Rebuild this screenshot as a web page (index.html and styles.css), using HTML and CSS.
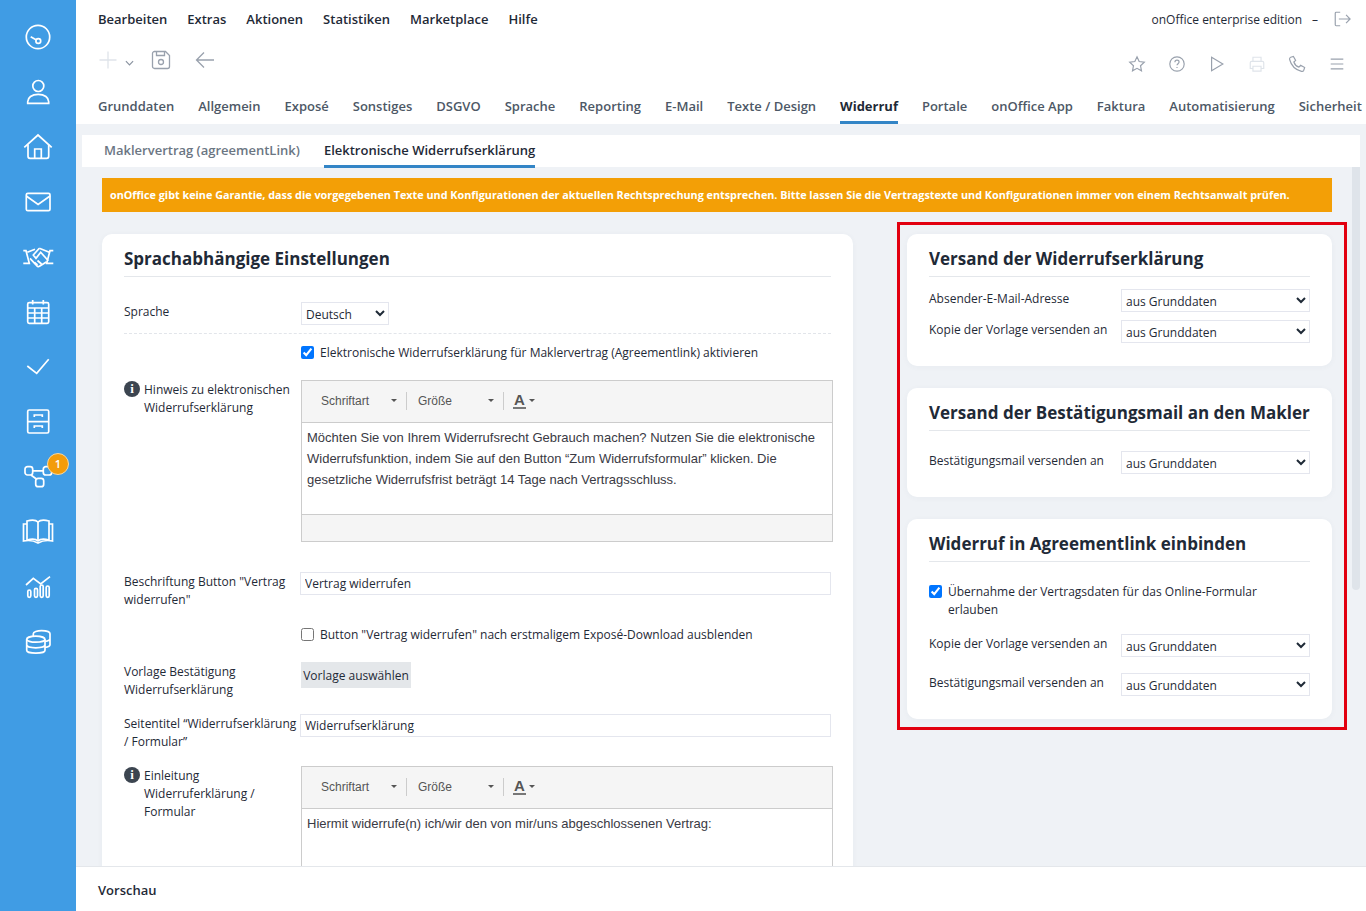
FILE: index.html
```html
<!DOCTYPE html>
<html lang="de">
<head>
    <meta charset="UTF-8">
    <meta name="viewport" content="width=device-width, initial-scale=1.0">
    <title>onOffice enterprise edition</title>
    <link rel="stylesheet" href="styles.css">
</head>
<body>
    <nav class="sidebar">
        <a class="side-item"><svg viewBox="0 0 32 32"><circle cx="16" cy="16" r="11.7"/><circle cx="16.3" cy="20" r="2.4"/><path d="M8.7 15.7l5.3 3"/></svg></a>
        <a class="side-item"><svg viewBox="0 0 32 32"><circle cx="16.3" cy="10" r="5.5"/><path d="M5.7 27.3v-1.5c0-4 4-7.5 10.5-7.5s10.5 3.5 10.5 7.5v1.5z"/></svg></a>
        <a class="side-item"><svg viewBox="0 0 32 32"><path d="M2.3 16.3L16 4l13.7 12.3"/><path d="M6 13.5v11.8a2 2 0 0 0 2 2h16.7a2 2 0 0 0 2-2V13.5"/><path d="M12.7 27.3V18h6.6v9.3"/></svg></a>
        <a class="side-item"><svg viewBox="0 0 32 32"><rect x="4.3" y="7.3" width="23.7" height="17.4" rx="1.5"/><path d="M4.3 10l11.8 8.5L28 10"/></svg></a>
        <a class="side-item"><svg viewBox="0 0 32 32"><path d="M1.3 9.700H4l3.300 12.600h-6"/><path d="M31.300 9.700H28l-3.300 12.600h6.600"/><path d="M5.300 11.300L13 8.300M17.300 7.300l10 4"/><path d="M17.300 7.300L11.300 14l2.700 3.300 4.700-6 7.600 8.400"/><path d="M8 17.300l6 6.500c1 1.400 2.300 2.400 3.500 1.400l7.200-4.500M12.500 21.500l3 2.500M15.500 19.500l4 3.500"/></svg></a>
        <a class="side-item"><svg viewBox="0 0 32 32"><rect x="5.700" y="6.700" width="21" height="20.600" rx="1.500"/><path d="M10.700 4v4.500M21.300 4v4.500M5.700 12h21M5.700 17h21M5.700 22h21M12.700 12v15.300M19.700 12v15.300"/></svg></a>
        <a class="side-item"><svg viewBox="0 0 32 32"><path d="M5.300 15l9.400 7.300 12-14"/></svg></a>
        <a class="side-item"><svg viewBox="0 0 32 32"><rect x="5.700" y="4" width="21" height="23" rx="1.500"/><path d="M5.700 15.700h21M12.300 11V9h8v2M12.300 22v-2h8v2"/></svg></a>
        <a class="side-item"><svg viewBox="0 0 32 32"><rect x="3" y="5.700" width="7.700" height="8.300" rx="2.500"/><rect x="21.300" y="5.700" width="8.400" height="8.300" rx="2.500"/><rect x="13.700" y="17.300" width="8" height="8.400" rx="2.500"/><path d="M10.700 9.800h10.600M9 14l5 3.800"/></svg><span class="badge">1</span></a>
        <a class="side-item"><svg viewBox="0 0 32 32"><path d="M5 5c4-1 9-1 11 1 2-2 7-2 11-1v19c-4-1-9-1-11 1-2-2-7-2-11-1z"/><path d="M16 6v19M5 8H1.500v17c5-1 10-.5 14.500 2 4.500-2.500 9.500-3 14.500-2V8H27"/></svg></a>
        <a class="side-item"><svg viewBox="0 0 32 32"><path d="M4 14l7.300-6.700 7.400 5.700L28 5.700"/><rect x="5.800" y="19" width="3" height="7.300" rx="1.500"/><rect x="12.500" y="17.300" width="3" height="9" rx="1.500"/><rect x="18.200" y="14" width="3" height="12.300" rx="1.500"/><rect x="24.200" y="15" width="3" height="11.300" rx="1.500"/></svg></a>
        <a class="side-item"><svg viewBox="0 0 32 32"><ellipse cx="13.800" cy="13.200" rx="9.100" ry="3"/><path d="M4.700 13.200v11c0 1.700 4 3 9.100 3s9.200-1.300 9.200-3v-11M4.700 18.800c0 1.700 4 3 9.100 3s9.200-1.300 9.200-3"/><path d="M11.300 7.700c0-1.700 3.700-3 8.300-3s8.400 1.300 8.400 3v11c0 1.100-2 2.200-5 2.700M11.300 7.700v2.800M23 15.500c3-.5 5-1.500 5-2.700"/></svg></a>
    </nav>

    <div class="main">
        <header class="header">
            <div class="menu-row">
                <div class="menu">
                    <a>Bearbeiten</a>
                    <a>Extras</a>
                    <a>Aktionen</a>
                    <a>Statistiken</a>
                    <a>Marketplace</a>
                    <a>Hilfe</a>
                </div>
                <div class="edition">
                    <span>onOffice enterprise edition</span>
                    <span class="edition-dash">–</span>
                    <svg class="tool-icon" viewBox="0 0 20 20"><path d="M8 2.500H3.500a1 1 0 0 0-1 1v13a1 1 0 0 0 1 1H8"/><path d="M6.500 10h12M14.500 5.500l4.500 4.500-4.500 4.500"/></svg>
                </div>
            </div>
            <div class="tool-row">
                <div class="tools-left">
                    <svg class="tool-icon faint" viewBox="0 0 20 20"><path d="M10 1.500v17M1.500 10h17"/></svg>
                    <svg class="chevron" viewBox="0 0 10 6"><path d="M1 1l4 4 4-4"/></svg>
                    <svg class="tool-icon save" viewBox="0 0 20 20"><path d="M3 1.500h11.500l4 4v11a2 2 0 0 1-2 2h-13a2 2 0 0 1-2-2v-13a2 2 0 0 1 2-2z"/><circle cx="10" cy="12" r="2.500"/><path d="M5.500 1.500v4h8v-4"/></svg>
                    <svg class="tool-icon back" viewBox="0 0 20 20"><path d="M19 10H1.500M9 2.500L1.500 10 9 17.500"/></svg>
                </div>
                <div class="tools-right">
                    <svg class="tool-icon" viewBox="0 0 20 20"><path d="M10 2l2.400 5.300 5.700.7-4.200 3.900 1.100 5.700L10 14.800l-5 2.800 1.100-5.700L1.900 8l5.700-.7z"/></svg>
                    <svg class="tool-icon" viewBox="0 0 20 20"><circle cx="10" cy="10" r="8"/><path d="M7.700 8c0-1.500 1-2.300 2.300-2.300s2.300.9 2.300 2.100c0 1.800-2.300 1.900-2.300 3.700M10 13.300v1.200"/></svg>
                    <svg class="tool-icon" viewBox="0 0 20 20"><path d="M4 2.500l12.500 7.500L4 17.500z"/></svg>
                    <svg class="tool-icon faint" viewBox="0 0 20 20"><path d="M5.500 7V2.500h9V7M5.500 15H2.500V8.500a1.500 1.500 0 0 1 1.500-1.500h12a1.500 1.500 0 0 1 1.500 1.500V15h-3M5.500 12.500h9v5.500h-9z"/></svg>
                    <svg class="tool-icon" viewBox="0 0 20 20"><path d="M3 2.500l3-1 2.500 4.500-2 1.800c.8 2.500 3 4.800 5.700 5.700l1.800-2 4.500 2.500-1 3c-.4 1-1.500 1.500-2.500 1.200C8.500 16.500 3.500 11.500 1.800 5c-.3-1 .2-2.100 1.200-2.500z"/></svg>
                    <svg class="tool-icon" viewBox="0 0 20 20"><path d="M3 4.500h14M3 10h14M3 15.500h14"/></svg>
                </div>
            </div>
            <div class="tabs">
                <a>Grunddaten</a>
                <a>Allgemein</a>
                <a>Exposé</a>
                <a>Sonstiges</a>
                <a>DSGVO</a>
                <a>Sprache</a>
                <a>Reporting</a>
                <a>E-Mail</a>
                <a>Texte / Design</a>
                <a class="active">Widerruf</a>
                <a>Portale</a>
                <a>onOffice App</a>
                <a>Faktura</a>
                <a>Automatisierung</a>
                <a>Sicherheit</a>
            </div>
        </header>

        <div class="subtabs">
            <a>Maklervertrag (agreementLink)</a>
            <a class="active">Elektronische Widerrufserklärung</a>
        </div>

        <div class="scroll-area">
            <div class="content">
                <div class="warning">onOffice gibt keine Garantie, dass die vorgegebenen Texte und Konfigurationen der aktuellen Rechtsprechung entsprechen. Bitte lassen Sie die Vertragstexte und Konfigurationen immer von einem Rechtsanwalt prüfen.</div>

                <div class="columns">
                    <section class="card left-card">
                        <h2>Sprachabhängige Einstellungen</h2>

                        <div class="row row-lang">
                            <label>Sprache</label>
                            <select class="lang-select"><option>Deutsch</option></select>
                        </div>
                        <div class="row row-check">
                            <span></span>
                            <label class="check"><input type="checkbox" checked>Elektronische Widerrufserklärung für Maklervertrag (Agreementlink) aktivieren</label>
                        </div>
                        <div class="row row-editor">
                            <label class="with-info"><i class="info">i</i><span>Hinweis zu elektronischen Widerrufserklärung</span></label>
                            <div class="editor">
                                <div class="editor-bar">
                                    <span class="combo font-combo">Schriftart<b class="caret"></b></span>
                                    <span class="combo size-combo">Größe<b class="caret"></b></span>
                                    <span class="color-btn"><span class="color-a">A</span><b class="caret"></b></span>
                                </div>
                                <div class="editor-text">Möchten Sie von Ihrem Widerrufsrecht Gebrauch machen? Nutzen Sie die elektronische Widerrufsfunktion, indem Sie auf den Button “Zum Widerrufsformular” klicken. Die gesetzliche Widerrufsfrist beträgt 14 Tage nach Vertragsschluss.</div>
                                <div class="editor-foot"></div>
                            </div>
                        </div>
                        <div class="row row-button-text">
                            <label>Beschriftung Button "Vertrag widerrufen"</label>
                            <input class="text-input" type="text" value="Vertrag widerrufen">
                        </div>
                        <div class="row row-check2">
                            <span></span>
                            <label class="check"><input type="checkbox">Button "Vertrag widerrufen" nach erstmaligem Exposé-Download ausblenden</label>
                        </div>
                        <div class="row row-template">
                            <label>Vorlage Bestätigung Widerrufserklärung</label>
                            <div><button class="template-btn">Vorlage auswählen</button></div>
                        </div>
                        <div class="row row-title">
                            <label>Seitentitel “Widerrufserklärung / Formular”</label>
                            <input class="text-input" type="text" value="Widerrufserklärung">
                        </div>
                        <div class="row row-intro">
                            <label class="with-info"><i class="info">i</i><span>Einleitung Widerruferklärung / Formular</span></label>
                            <div class="editor">
                                <div class="editor-bar">
                                    <span class="combo font-combo">Schriftart<b class="caret"></b></span>
                                    <span class="combo size-combo">Größe<b class="caret"></b></span>
                                    <span class="color-btn"><span class="color-a">A</span><b class="caret"></b></span>
                                </div>
                                <div class="editor-text tall">Hiermit widerrufe(n) ich/wir den von mir/uns abgeschlossenen Vertrag:</div>
                            </div>
                        </div>
                    </section>

                    <div class="right-col">
                        <section class="card side-card">
                            <h2>Versand der Widerrufserklärung</h2>
                            <div class="field first">
                                <label>Absender-E-Mail-Adresse</label>
                                <select><option>aus Grunddaten</option></select>
                            </div>
                            <div class="field">
                                <label>Kopie der Vorlage versenden an</label>
                                <select><option>aus Grunddaten</option></select>
                            </div>
                        </section>
                        <section class="card side-card">
                            <h2>Versand der Bestätigungsmail an den Makler</h2>
                            <div class="field first spaced">
                                <label>Bestätigungsmail versenden an</label>
                                <select><option>aus Grunddaten</option></select>
                            </div>
                        </section>
                        <section class="card side-card">
                            <h2>Widerruf in Agreementlink einbinden</h2>
                            <label class="check wide"><input type="checkbox" checked><span>Übernahme der Vertragsdaten für das Online-Formular erlauben</span></label>
                            <div class="field big">
                                <label>Kopie der Vorlage versenden an</label>
                                <select><option>aus Grunddaten</option></select>
                            </div>
                            <div class="field big second">
                                <label>Bestätigungsmail versenden an</label>
                                <select><option>aus Grunddaten</option></select>
                            </div>
                        </section>
                    </div>
                </div>
            </div>
            <div class="scrollbar"></div>
            <div class="highlight"></div>
        </div>

        <footer class="footer">Vorschau</footer>
    </div>
</body>
</html>
```

FILE: styles.css
```css
* {
    box-sizing: border-box;
}

body {
    display: flex;
    height: 911px;
    margin: 0;
    overflow: hidden;
    font-family: 'Open Sans', sans-serif;
    font-size: 12px;
    color: #1f2a37;
    background: #eff2f6;
}

/* sidebar */
.sidebar {
    flex: 0 0 76px;
    padding-top: 9px;
    background: #409ce4;
}

.side-item {
    position: relative;
    display: flex;
    justify-content: center;
    align-items: center;
    height: 55px;
}

.side-item svg {
    width: 32px;
    height: 32px;
    fill: none;
    stroke: #fff;
    stroke-width: 1.7;
}

.badge {
    position: absolute;
    top: 4px;
    left: 47px;
    width: 22px;
    height: 22px;
    border: 1px solid #f7d8a0;
    border-radius: 50%;
    background: #f39c0a;
    color: #fff;
    font-size: 11px;
    font-weight: 600;
    line-height: 20px;
    text-align: center;
}

/* header */
.main {
    flex: 1;
    display: flex;
    flex-direction: column;
    min-width: 0;
}

.header {
    flex: 0 0 124px;
    padding-left: 22px;
    background: #fff;
    overflow: hidden;
}

.menu-row {
    display: flex;
    justify-content: space-between;
    align-items: center;
    height: 38px;
    padding-right: 15px;
}

.menu {
    display: flex;
    gap: 20px;
    font-size: 13px;
    font-weight: 600;
    color: #1f2a37;
}

.edition {
    display: flex;
    align-items: center;
    font-size: 12px;
}

.edition-dash {
    margin: 0 15px 0 10px;
}

.tool-icon {
    width: 18px;
    height: 18px;
    fill: none;
    stroke: #99a1ad;
    stroke-width: 1.3;
}

.tool-icon.faint {
    stroke: #dfe4ea;
}

.tool-row {
    display: flex;
    justify-content: space-between;
    height: 44px;
    padding-right: 20px;
}

.tools-left {
    display: flex;
    align-items: center;
}

.tools-left .tool-icon {
    width: 20px;
    height: 20px;
}

.chevron {
    width: 9px;
    height: 6px;
    margin: 5px 0 0 7px;
    fill: none;
    stroke: #8a93a0;
    stroke-width: 1.3;
}

.save {
    margin-left: 17px;
}

.back {
    margin-left: 24px;
}

.tools-right {
    display: flex;
    align-items: center;
    gap: 22px;
    padding-top: 8px;
}

.tabs {
    display: flex;
    gap: 24px;
    height: 42px;
    padding-top: 15px;
    font-size: 13px;
    font-weight: 600;
    color: #4d5866;
    white-space: nowrap;
}

.tabs a {
    height: 27px;
    line-height: 18px;
}

.tabs .active {
    border-bottom: 3px solid #3385c6;
    font-weight: 700;
    color: #1f2a37;
}

.subtabs {
    position: relative;
    flex: 0 0 32px;
    display: flex;
    gap: 24px;
    min-height: 0;
    margin: 11px 6px 0;
    padding-left: 22px;
    background: #fff;
    font-size: 13px;
    font-weight: 600;
    color: #6b7683;
}

.subtabs a {
    height: 33px;
    line-height: 31px;
}

.subtabs .active {
    border-bottom: 3px solid #3385c6;
    color: #1f2a37;
}

/* content */
.scroll-area {
    position: relative;
    flex: 1;
    min-height: 0;
    overflow: hidden;
}

.content {
    padding: 11px 34px 0 26px;
}

.warning {
    height: 34px;
    padding-left: 8px;
    background: #f39f06;
    color: #fff;
    font-size: 10.800px;
    font-weight: 700;
    line-height: 34px;
    white-space: nowrap;
}

.columns {
    display: flex;
    justify-content: space-between;
    align-items: flex-start;
    margin-top: 22px;
}

.card {
    padding: 0 22px;
    border-radius: 10px;
    background: #fff;
    box-shadow: 0 1px 6px rgba(60, 70, 90, 0.04);
}

.card h2 {
    height: 43px;
    margin: 0;
    border-bottom: 1px solid #e4e7eb;
    font-size: 17px;
    font-weight: 700;
    line-height: 50px;
    color: #1f2a37;
    white-space: nowrap;
}

.left-card {
    flex: 0 0 751px;
    min-width: 0;
    height: 800px;
}

.row {
    display: grid;
    grid-template-columns: 177px 1fr;
    line-height: 18px;
}

.row label,
.field label {
    padding-top: 1px;
}

.row-lang {
    height: 57px;
    padding-top: 25px;
    border-bottom: 1px dashed #e2e5ea;
}

.lang-select {
    width: 88px;
    height: 23px;
}

select {
    padding: 1px 0 0;
    border: 1px solid #e4e6ee;
    border-radius: 0;
    background: #fff;
    font-family: 'Open Sans', sans-serif;
    font-size: 12px;
    color: #1f2a37;
}

.check {
    display: flex;
    align-items: flex-start;
}

.check input {
    flex: 0 0 13px;
    width: 13px;
    height: 13px;
    margin: 2px 6px 0 0;
}

.row-check {
    height: 46px;
    padding-top: 9px;
}

.with-info {
    display: flex;
}

.info {
    flex: 0 0 16px;
    width: 16px;
    height: 16px;
    margin: 0 4px 0 0;
    border-radius: 50%;
    background: #3c4550;
    color: #fff;
    font-family: 'Liberation Serif', serif;
    font-size: 13px;
    font-weight: 700;
    font-style: normal;
    line-height: 16px;
    text-align: center;
}

.editor {
    width: 532px;
    border: 1px solid #ccc;
    font-family: 'Liberation Sans', sans-serif;
}

.editor-bar {
    display: flex;
    align-items: center;
    height: 42px;
    padding: 0 0 2px 19px;
    border-bottom: 1px solid #ccc;
    background: #f5f5f5;
    font-size: 12px;
    color: #555;
}

.combo {
    display: flex;
    align-items: center;
    justify-content: space-between;
    height: 18px;
    padding-right: 9px;
    border-right: 1px solid #ccc;
}

.font-combo {
    width: 86px;
}

.size-combo {
    width: 86px;
    margin-left: 11px;
}

.caret {
    width: 0;
    height: 0;
    border-left: 3px solid transparent;
    border-right: 3px solid transparent;
    border-top: 3px solid #555;
}

.color-btn {
    display: flex;
    align-items: center;
    gap: 3px;
    margin-left: 9px;
}

.color-a {
    width: 13px;
    border-bottom: 2px solid #777;
    font-size: 15px;
    font-weight: 700;
    line-height: 15px;
    text-align: center;
}

.editor-text {
    height: 91px;
    padding: 4px 5px;
    font-size: 13px;
    line-height: 21px;
    color: #3a3a44;
}

.editor-text.tall {
    height: 120px;
}

.editor-foot {
    height: 27px;
    border-top: 1px solid #ccc;
    background: #f5f5f5;
}

.row-button-text {
    margin-top: 30px;
}

.text-input {
    width: 531px;
    height: 23px;
    margin-left: -1px;
    padding: 0 4px;
    border: 1px solid #e4e6ee;
    font-family: 'Open Sans', sans-serif;
    font-size: 12px;
    color: #1f2a37;
}

.row-check2 {
    margin-top: 16px;
}

.row-template {
    margin-top: 18px;
}

.template-btn {
    width: 110px;
    height: 26px;
    padding: 0;
    border: none;
    background: #e4e7ea;
    font-family: 'Open Sans', sans-serif;
    font-size: 12px;
    color: #1f2a37;
    white-space: nowrap;
}

.row-title {
    margin-top: 15px;
}

.row-intro {
    margin-top: 15px;
}

.right-col {
    display: flex;
    flex-direction: column;
    gap: 22px;
    flex: 0 0 425px;
}

.side-card {
    padding-bottom: 23px;
}

.field {
    display: flex;
    justify-content: space-between;
    line-height: 18px;
    margin-top: 8px;
}

.field.first {
    margin-top: 12px;
}

.field.first.spaced {
    margin-top: 20px;
}

.field.big {
    margin-top: 15px;
}

.field.big.second {
    margin-top: 16px;
}

.field select {
    flex: 0 0 189px;
    height: 23px;
}

.check.wide {
    margin-top: 21px;
    line-height: 18px;
    padding-right: 40px;
}

.scrollbar {
    position: absolute;
    top: 0;
    right: 6px;
    width: 8px;
    height: 423px;
    border-radius: 0 0 4px 4px;
    background: #dfe4ea;
}

.highlight {
    position: absolute;
    top: 55px;
    left: 821px;
    width: 450px;
    height: 508px;
    border: 3px solid #e2000f;
    pointer-events: none;
}

/* footer */
.footer {
    flex: 0 0 45px;
    height: 45px;
    padding-left: 22px;
    border-top: 1px solid #e4e7eb;
    background: #fff;
    font-size: 13px;
    font-weight: 600;
    line-height: 46px;
}
```
